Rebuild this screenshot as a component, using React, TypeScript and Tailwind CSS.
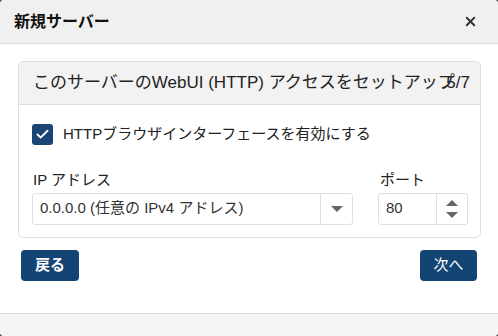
import { Check, X } from "lucide-react";

const font = { fontFamily: '"Liberation Sans", "Noto Sans CJK JP", sans-serif' };

export default function App() {
  return (
    <div className="w-[498px] h-[336px] bg-[#3a3a3a]" style={font}>
      <div className="w-full h-full bg-white rounded-[4px] overflow-hidden flex flex-col">
        {/* header */}
        <div className="h-[44px] shrink-0 bg-[#f0f0f0] border-b border-[#dcdcdc] flex items-center justify-between pl-[14px] pr-[20px]">
          <h1 className="text-[16px] font-bold text-[#111]">新規サーバー</h1>
          <X className="w-[15px] h-[15px] text-[#333]" strokeWidth={3} />
        </div>

        <div className="flex-1 px-[18px] pt-[17px]">
          {/* card */}
          <div className="border border-[#dedede] rounded-[5px] w-[463px]">
            <div className="h-[43px] bg-[#f2f2f2] border-b border-[#dcdcdc] rounded-t-[5px] flex items-center justify-between pl-[14px] pr-[10px] text-[17px] text-[#222]">
              <span className="flex-1 min-w-0 whitespace-nowrap">このサーバーのWebUI (HTTP) アクセスをセットアップ</span>
              <span>5/7</span>
            </div>
            <div className="px-[13px] pt-[18px] pb-[12px]">
              <label className="flex items-center gap-[10px] text-[15px] text-[#222]">
                <span className="w-[21px] h-[21px] rounded-[3px] bg-[#1b4673] flex items-center justify-center">
                  <Check className="w-[15px] h-[15px] text-white" strokeWidth={3} />
                </span>
                HTTPブラウザインターフェースを有効にする
              </label>

              <div className="flex gap-[25px] mt-[24px]">
                <div className="flex flex-col">
                  <span className="text-[15px] text-[#222] leading-[20px] ml-[1px]">IP アドレス</span>
                  <div className="mt-[3px] w-[321px] h-[32px] border border-[#e0e0e0] rounded-[3px] flex items-center">
                    <span className="flex-1 pl-[7px] text-[15px] text-[#333]">0.0.0.0 (任意の IPv4 アドレス)</span>
                    <span className="w-[32px] h-full border-l border-[#e0e0e0] flex items-center justify-center">
                      <span className="w-0 h-0 border-l-[6px] border-r-[6px] border-t-[6px] border-l-transparent border-r-transparent border-t-[#666]" />
                    </span>
                  </div>
                </div>
                <div className="flex flex-col">
                  <span className="text-[15px] text-[#222] leading-[20px] ml-[2px]">ポート</span>
                  <div className="mt-[3px] w-[90px] h-[32px] border border-[#e0e0e0] rounded-[3px] flex items-center">
                    <span className="flex-1 pl-[7px] text-[15px] text-[#333]">80</span>
                    <span className="w-[31px] h-full border-l border-[#e0e0e0] flex flex-col items-center justify-center gap-[6px]">
                      <span className="w-0 h-0 border-l-[6px] border-r-[6px] border-b-[6px] border-l-transparent border-r-transparent border-b-[#666]" />
                      <span className="w-0 h-0 border-l-[6px] border-r-[6px] border-t-[6px] border-l-transparent border-r-transparent border-t-[#666]" />
                    </span>
                  </div>
                </div>
              </div>
            </div>
          </div>

          {/* buttons */}
          <div className="flex justify-between mt-[12px] pl-[3px] pr-[3px]">
            <button className="w-[58px] h-[31px] rounded-[4px] bg-[#134574] text-white text-[15px] font-bold">戻る</button>
            <button className="w-[57px] h-[31px] rounded-[4px] bg-[#134574] text-white text-[15px]">次へ</button>
          </div>
        </div>

        {/* footer */}
        <div className="h-[23px] shrink-0 bg-[#f5f5f5] border-t border-[#dcdcdc]" />
      </div>
    </div>
  );
}
